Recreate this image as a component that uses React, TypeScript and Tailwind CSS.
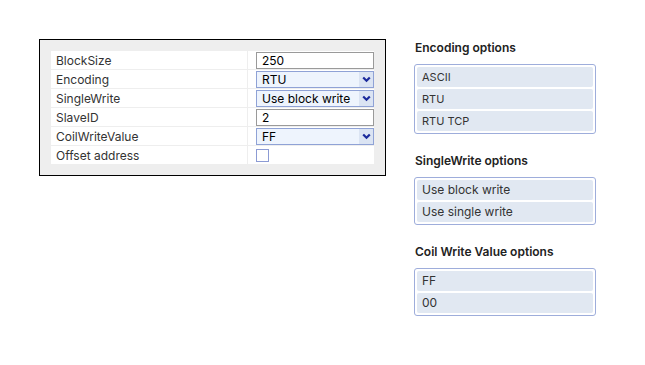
import React from 'react';

type Row = { label: string; kind: 'text' | 'select' | 'check'; value?: string };

const rows: Row[] = [
  { label: 'BlockSize', kind: 'text', value: '250' },
  { label: 'Encoding', kind: 'select', value: 'RTU' },
  { label: 'SingleWrite', kind: 'select', value: 'Use block write' },
  { label: 'SlaveID', kind: 'text', value: '2' },
  { label: 'CoilWriteValue', kind: 'select', value: 'FF' },
  { label: 'Offset address', kind: 'check' },
];

const optionGroups = [
  { title: 'Encoding options', items: ['ASCII', 'RTU', 'RTU TCP'], small: true },
  { title: 'SingleWrite options', items: ['Use block write', 'Use single write'], small: false },
  { title: 'Coil Write Value options', items: ['FF', '00'], small: false },
];

function Chevron() {
  return (
    <svg width="9" height="7" viewBox="0 0 9 7">
      <path d="M1.2 1.5 L4.5 4.8 L7.8 1.5" fill="none" stroke="#1b2a9c" strokeWidth="2.2" />
    </svg>
  );
}

function Field({ row }: { row: Row }) {
  if (row.kind === 'check') {
    return <div className="w-[13px] h-[13px] border border-[#8c9bd4] bg-white" />;
  }
  if (row.kind === 'select') {
    return (
      <div className="flex items-center w-[118px] h-[17px] border border-[#8fa2d6] bg-[#eef4fd] pl-[5px] text-[12px] text-black">
        <span className="flex-1 pt-px">{row.value}</span>
        <span className="flex items-center justify-center w-[14px] h-[15px] bg-[#dbe4f3]">
          <Chevron />
        </span>
      </div>
    );
  }
  return (
    <div className="flex items-center w-[118px] h-[17px] border border-[#9a9a9a] bg-white pl-[5px] pt-px text-[12px] text-black">
      {row.value}
    </div>
  );
}

export default function App() {
  return (
    <div className="flex items-start w-[645px] h-[365px] bg-white font-['Inter',sans-serif]">
      {/* settings panel */}
      <div className="ml-[39px] mt-[39px] w-[347px] h-[137px] border border-black bg-[#eeeeee] p-[11px]">
        <div className="grid grid-cols-[196px_126px] gap-px">
          {rows.map((r) => (
            <React.Fragment key={r.label}>
              <div className="h-[18px] bg-white flex items-center pl-[5px] pt-px text-[12px] text-[#333]">{r.label}</div>
              <div className="h-[18px] bg-white flex items-center pl-[8px]">
                <Field row={r} />
              </div>
            </React.Fragment>
          ))}
        </div>
      </div>

      {/* option lists */}
      <div className="ml-[28px] mt-[40px] w-[182px] flex flex-col">
        {optionGroups.map((g, i) => (
          <div key={g.title} className={i > 0 ? 'mt-[19px]' : ''}>
            <div className="h-[16px] leading-[16px] pl-px text-[12px] font-semibold text-[#222]">{g.title}</div>
            <div className="mt-[8px] border border-[#9eaddb] rounded-[3px] p-[2px] flex flex-col gap-[2px]">
              {g.items.map((it) => (
                <div
                  key={it}
                  className={`h-[20px] flex items-center pl-[5px] rounded-[2px] bg-[#e1e8f2] text-[#333] ${g.small ? 'text-[11px]' : 'text-[12px]'}`}
                >
                  {it}
                </div>
              ))}
            </div>
          </div>
        ))}
      </div>
    </div>
  );
}
